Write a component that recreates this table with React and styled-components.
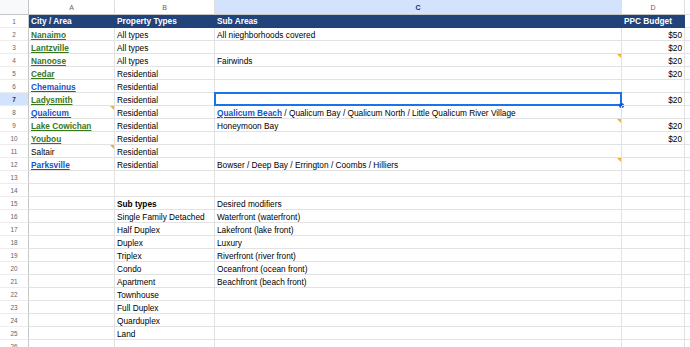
import React from 'react';
import styled, { createGlobalStyle, css } from 'styled-components';

const GlobalStyle = createGlobalStyle`
  html, body {
    margin: 0;
    padding: 0;
    background: #ffffff;
  }
  body {
    font-family: "Liberation Sans", Arial, sans-serif;
    overflow: hidden;
  }
`;

const GREEN = '#38761d';
const BLUE = '#1155cc';

const Sheet = styled.div`
  display: grid;
  grid-template-columns: 29px 86px 100px 407px 63px 1fr;
  grid-template-rows: 15px;
  grid-auto-rows: 13px;
  width: 690px;
  height: 347px;
  overflow: hidden;
  font-size: 8.3px;
  color: #000000;
`;

const Corner = styled.div`
  background: #f8f9fa;
  border-right: 1px solid #c4c7c5;
  border-bottom: 1px solid #c4c7c5;
  box-sizing: border-box;
`;

const ColHead = styled.div`
  box-sizing: border-box;
  display: flex;
  align-items: center;
  justify-content: center;
  font-size: 7px;
  color: #5f6368;
  background: #ffffff;
  border-right: 1px solid #e0e0e0;
  border-bottom: 1px solid #c4c7c5;
  ${(p) => p.$active && css`
    background: #d3e3fd;
    color: #0b2f6b;
    font-weight: bold;
  `}
`;

const RowHead = styled.div`
  box-sizing: border-box;
  display: flex;
  align-items: center;
  justify-content: center;
  font-size: 6.4px;
  color: #5f6368;
  background: #ffffff;
  border-right: 1px solid #c4c7c5;
  border-bottom: 1px solid #ececec;
  ${(p) => p.$active && css`
    background: #d3e3fd;
    color: #0b2f6b;
    font-weight: bold;
  `}
`;

const Cell = styled.div`
  position: relative;
  box-sizing: border-box;
  padding: 0 2px;
  line-height: 14px;
  white-space: pre;
  border-right: 1px solid #e2e2e2;
  border-bottom: 1px solid #e2e2e2;
  text-align: ${(p) => (p.$right ? 'right' : 'left')};
  font-weight: ${(p) => (p.$bold ? 'bold' : 'normal')};
  ${(p) => p.$head && css`
    background: #22427a;
    color: #ffffff;
    font-weight: bold;
    line-height: 13px;
    border-right-color: #22427a;
    border-bottom-color: #22427a;
  `}
  ${(p) => p.$note && css`
    &::before {
      content: '';
      position: absolute;
      top: 0;
      right: 0;
      border-top: 4px solid #f6ae2d;
      border-left: 4px solid transparent;
    }
  `}
`;

const Selection = styled.div`
  position: absolute;
  left: -1px;
  top: -1px;
  right: -1px;
  bottom: -1px;
  border: 2px solid #1a73e8;
  pointer-events: none;
`;

const Handle = styled.span`
  position: absolute;
  right: -4px;
  bottom: -4px;
  width: 5px;
  height: 5px;
  border-radius: 50%;
  background: #1a56c8;
`;

const Filler = styled.div`
  border-bottom: 1px solid #e2e2e2;
  box-sizing: border-box;
`;

const Link = styled.span`
  color: ${(p) => p.$color};
  font-weight: bold;
  text-decoration: underline;
`;

const g = (t) => ({ link: GREEN, t });
const b = (t) => ({ link: BLUE, t });

const rows = [
  { head: true, cells: ['City / Area', 'Property Types', 'Sub Areas', 'PPC Budget'] },
  { cells: [g('Nanaimo'), 'All types', 'All nieghborhoods covered', '$50'] },
  { cells: [g('Lantzville'), 'All types', '', '$20'] },
  { cells: [g('Nanoose'), 'All types', { t: 'Fairwinds', note: true }, '$20'] },
  { cells: [g('Cedar'), 'Residential', '', '$20'] },
  { cells: [b('Chemainus'), 'Residential', '', ''] },
  { cells: [g('Ladysmith'), 'Residential', { t: '', selected: true }, '$20'] },
  {
    cells: [
      { link: BLUE, t: 'Qualicum ', note: true },
      'Residential',
      { t: ' / Qualicum Bay / Qualicum North / Little Qualicum River Village', pre: 'Qualicum Beach' },
      '',
    ],
  },
  { cells: [g('Lake Cowichan'), 'Residential', { t: 'Honeymoon Bay', note: true }, '$20'] },
  { cells: [g('Youbou'), 'Residential', '', '$20'] },
  { cells: [{ t: 'Saltair', note: true }, 'Residential', '', ''] },
  { cells: [b('Parksville'), 'Residential', { t: 'Bowser / Deep Bay / Errington / Coombs / Hilliers', note: true }, ''] },
  { cells: ['', '', '', ''] },
  { cells: ['', '', '', ''] },
  { cells: ['', { t: 'Sub types', bold: true }, 'Desired modifiers', ''] },
  { cells: ['', 'Single Family Detached', 'Waterfront (waterfront)', ''] },
  { cells: ['', 'Half Duplex', 'Lakefront (lake front)', ''] },
  { cells: ['', 'Duplex', 'Luxury', ''] },
  { cells: ['', 'Triplex', 'Riverfront (river front)', ''] },
  { cells: ['', 'Condo', 'Oceanfront (ocean front)', ''] },
  { cells: ['', 'Apartment', 'Beachfront (beach front)', ''] },
  { cells: ['', 'Townhouse', '', ''] },
  { cells: ['', 'Full Duplex', '', ''] },
  { cells: ['', 'Quarduplex', '', ''] },
  { cells: ['', 'Land', '', ''] },
  { cells: ['', '', '', ''] },
];

function renderCell(cell, col, head, key) {
  const c = typeof cell === 'string' ? { t: cell } : cell;
  // C8 has a link in front of plain text, the notes sit on the cell corner
  return (
    <Cell key={key} $head={head} $right={col === 3 && !head} $bold={c.bold} $note={c.note}>
      {c.pre && <Link $color={BLUE}>{c.pre}</Link>}
      {c.link ? <Link $color={c.link}>{c.t}</Link> : c.t}
      {c.selected && (
        <Selection>
          <Handle />
        </Selection>
      )}
    </Cell>
  );
}

export default function App() {
  return (
    <>
      <GlobalStyle />
      <Sheet>
        <Corner />
        <ColHead>A</ColHead>
        <ColHead>B</ColHead>
        <ColHead $active>C</ColHead>
        <ColHead>D</ColHead>
        <Filler />
        {rows.map((row, i) => (
          <React.Fragment key={i}>
            <RowHead $active={i === 6}>{i + 1}</RowHead>
            {row.cells.map((cell, j) => renderCell(cell, j, row.head, j))}
            <Filler />
          </React.Fragment>
        ))}
      </Sheet>
    </>
  );
}
